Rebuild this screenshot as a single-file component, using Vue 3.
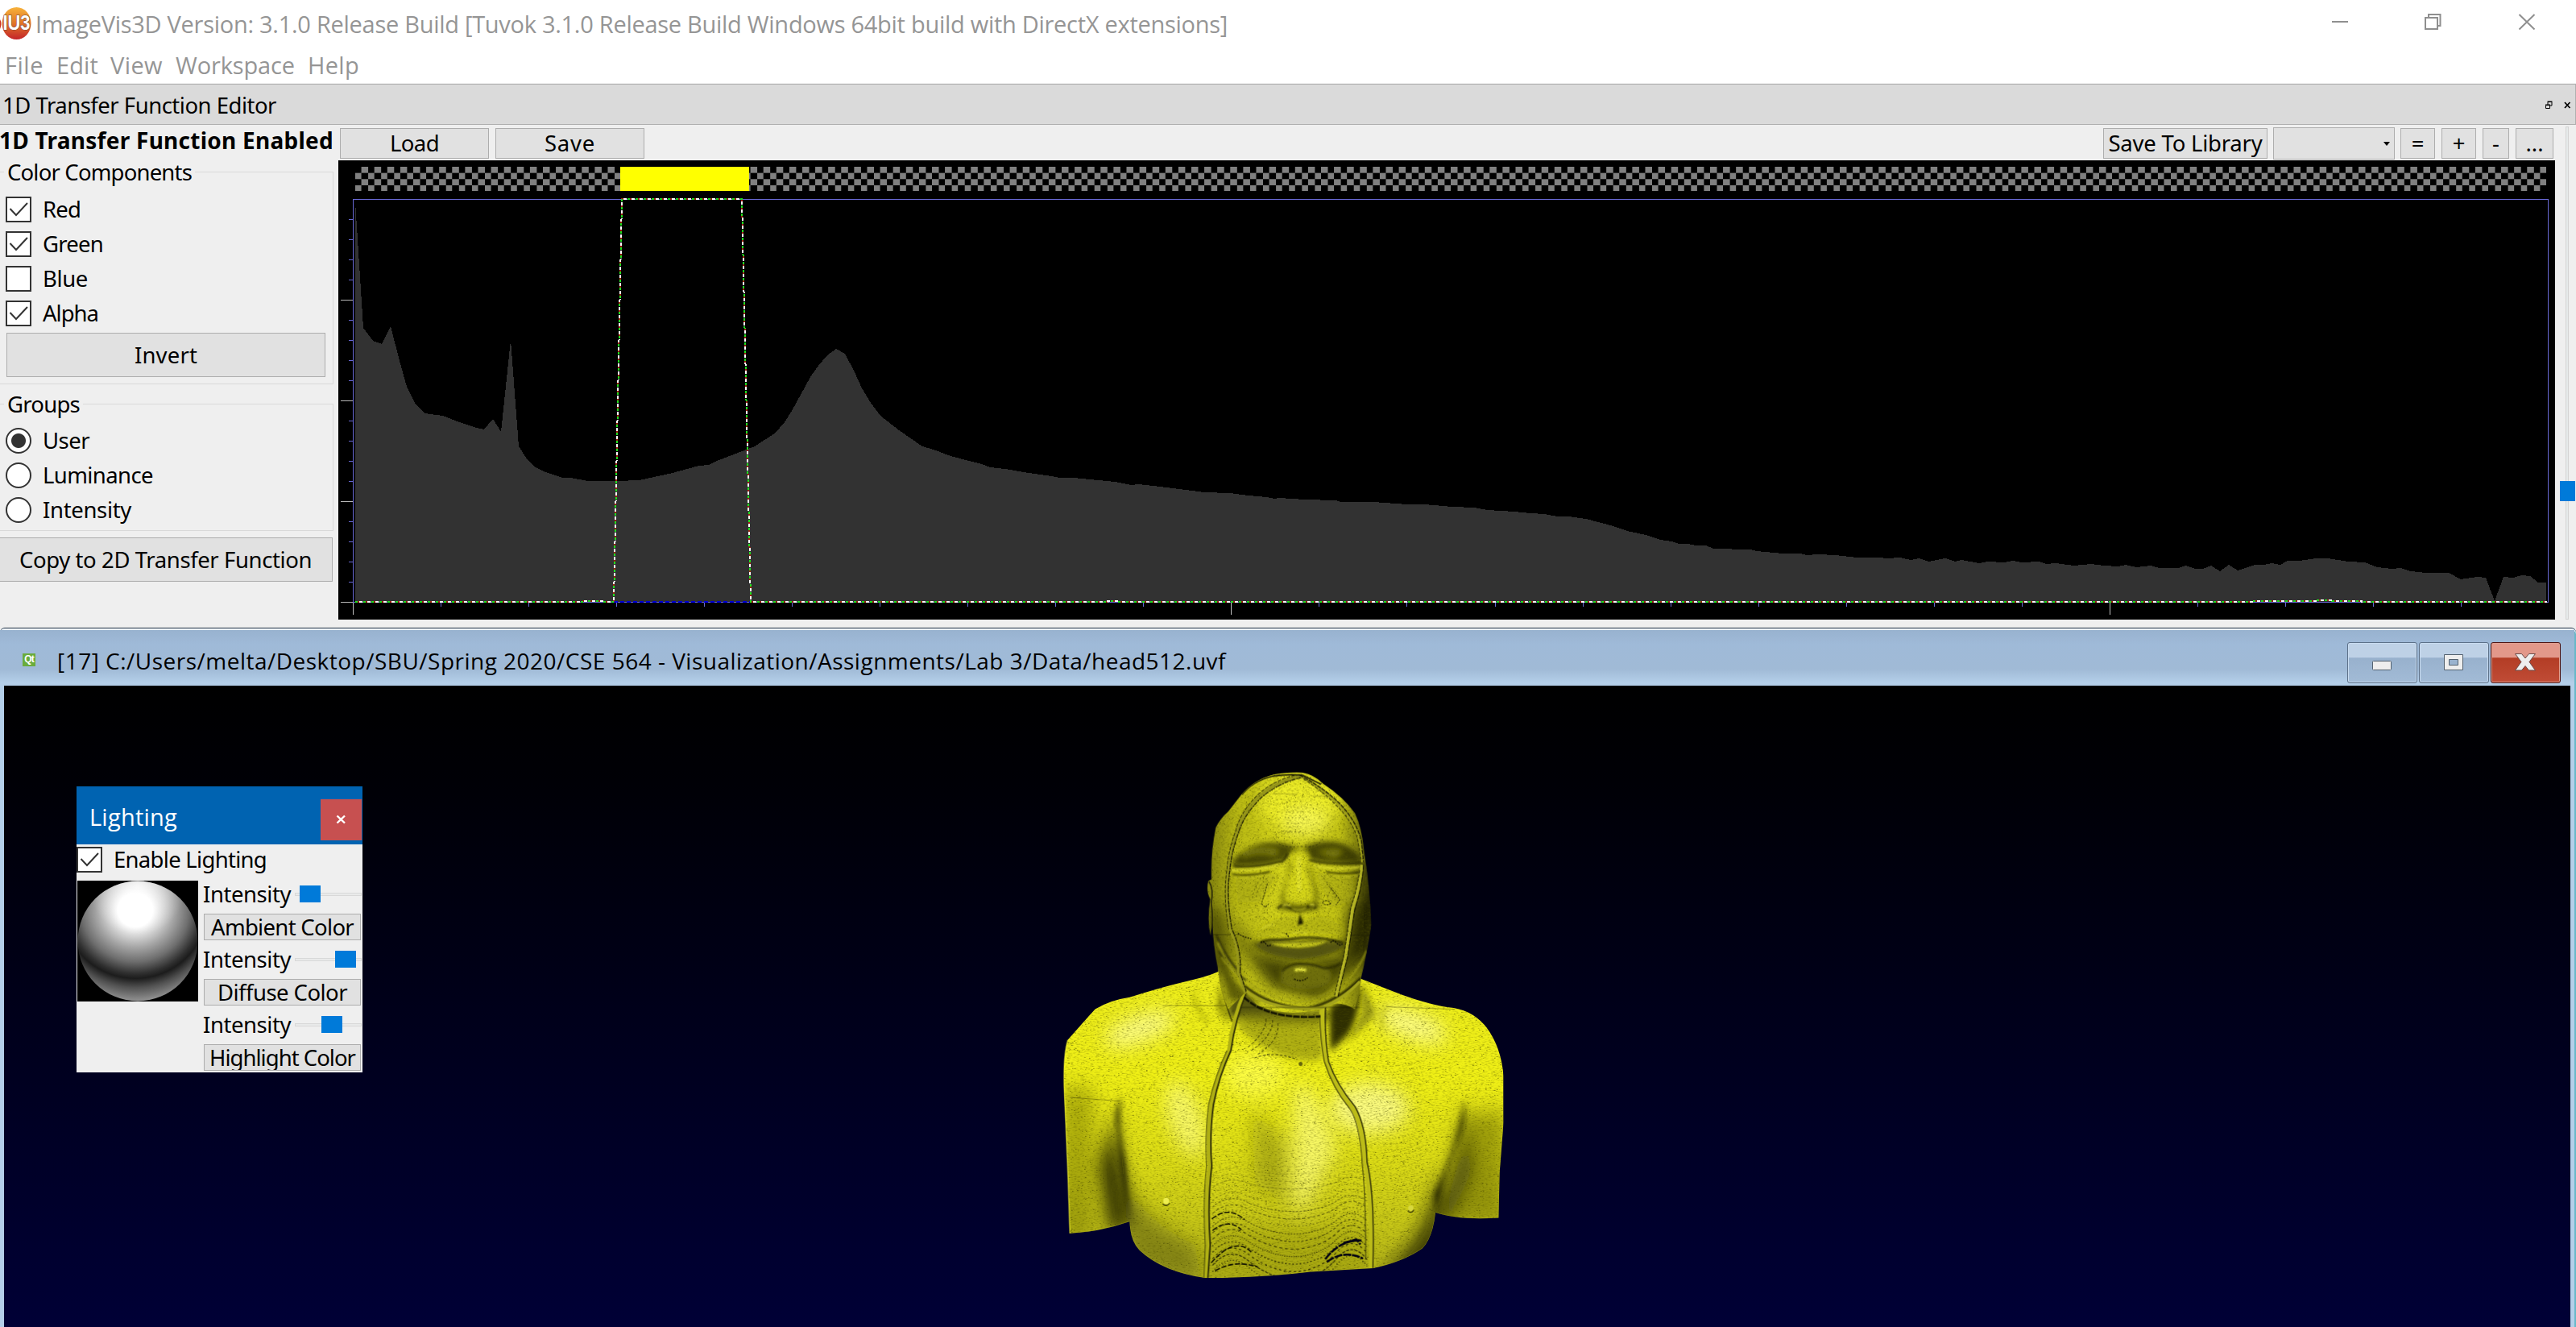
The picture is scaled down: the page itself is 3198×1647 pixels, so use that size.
<script setup>
// Tightens or loosens tracking so a label fills the given advance width.
const vFit = {
  mounted(el, { value }) {
    const n = el.textContent.length
    const w = el.getBoundingClientRect().width
    el.style.letterSpacing = `${(value - w) / n}px`
  },
}

const menus = [
  { label: 'File', w: 48 },
  { label: 'Edit', w: 52 },
  { label: 'View', w: 65 },
  { label: 'Workspace', w: 148 },
  { label: 'Help', w: 64 },
]
const channels = [
  { label: 'Red', w: 47, on: true },
  { label: 'Green', w: 75, on: true },
  { label: 'Blue', w: 56, on: false },
  { label: 'Alpha', w: 69, on: true },
]
const groups = [
  { label: 'User', w: 58, on: true },
  { label: 'Luminance', w: 137, on: false },
  { label: 'Intensity', w: 110, on: false },
]
const lights = [
  { label: 'Ambient Color', w: 177, pos: 5 },
  { label: 'Diffuse Color', w: 161, pos: 49 },
  { label: 'Highlight Color', w: 181, pos: 32 },
]

const histogram = [
  [441, 250], [451, 407], [463, 423], [474, 427], [485, 405], [496, 448], [505, 480], [516, 502], [527, 513], [550, 516],
  [570, 524], [592, 531], [601, 533], [612, 520], [622, 536], [634, 422], [644, 554], [655, 571], [663, 579], [675, 585],
  [698, 593], [708, 593], [730, 597], [765, 597], [794, 596], [835, 587], [868, 578], [880, 577], [890, 572], [924, 559],
  [937, 554], [963, 537], [974, 524], [983, 510], [1006, 468], [1016, 454], [1027, 441], [1038, 433], [1049, 439],
  [1061, 462], [1070, 482], [1081, 500], [1093, 516], [1116, 534], [1145, 554], [1159, 558], [1180, 566], [1203, 572],
  [1219, 576], [1229, 580], [1248, 582], [1271, 586], [1305, 591], [1315, 593], [1333, 593], [1384, 598], [1404, 602],
  [1414, 601], [1440, 604], [1480, 609], [1495, 611], [1527, 612], [1550, 615], [1572, 617], [1582, 619], [1588, 618],
  [1620, 620], [1658, 621], [1665, 623], [1705, 623], [1733, 625], [1747, 626], [1768, 626], [1803, 629], [1830, 630],
  [1847, 633], [1880, 635], [1900, 637], [1917, 638], [1934, 641], [1947, 641], [1969, 644], [2003, 653], [2020, 659],
  [2043, 664], [2062, 670], [2075, 672], [2084, 675], [2095, 675], [2105, 677], [2118, 677], [2127, 681], [2173, 682],
  [2181, 684], [2213, 687], [2235, 687], [2243, 689], [2256, 688], [2279, 689], [2305, 692], [2333, 692], [2342, 693],
  [2359, 692], [2372, 695], [2382, 693], [2395, 697], [2404, 695], [2415, 693], [2427, 697], [2435, 695], [2457, 699],
  [2468, 697], [2488, 698], [2499, 696], [2510, 698], [2531, 697], [2540, 700], [2552, 699], [2575, 702], [2596, 700],
  [2612, 702], [2629, 703], [2639, 701], [2652, 704], [2670, 702], [2681, 705], [2704, 705], [2713, 702], [2725, 706],
  [2735, 706], [2745, 702], [2756, 709], [2767, 701], [2778, 708], [2790, 704], [2800, 701], [2811, 701], [2820, 699],
  [2831, 701], [2840, 696], [2855, 696], [2875, 693], [2890, 693], [2915, 697], [2936, 698], [2951, 704], [2970, 706],
  [2980, 705], [2993, 709], [3011, 711], [3040, 711], [3055, 719], [3075, 716], [3086, 717], [3097, 746], [3108, 716],
  [3120, 717], [3131, 714], [3141, 715], [3151, 723], [3161, 723],
]
const histPath = 'M441,747 L' + histogram.map((p) => p.join(',')).join(' ') + ' L3161,747 Z'
const curve =
  'M441,747 H724 V746 H750 V747 H762 L772,247 H921 L932,747 H1375 V746 H1387 V747 H2796 V746 H2875 V745 H2895 V746 H2932 V747 H3162'

const yTicks = Array.from({ length: 20 }, (_, i) => ({ y: 272.5 + i * 25, major: (i + 1) % 5 === 0 }))
const xTicks = Array.from({ length: 25 }, (_, i) => ({ x: 438.5 + i * 109.04, major: i % 10 === 0 }))

const ripples = Array.from({ length: 17 }, (_, i) => {
  const y = 1165 + i * 18
  const d = 14 + i * 2.4
  return {
    d: `M552,${y + 22} Q605,${y - d * 0.7} 665,${y + 12} Q740,${y + d * 1.3} 815,${y + d * 1.2} Q885,${y + d} 925,${y + 8} Q975,${y - d} 1022,${y + 6}`,
    o: 0.15 + i * 0.04,
    dash: `${3 + (i % 4) * 2} ${4 + (i % 3) * 2}`,
  }
})
const chestLines = Array.from({ length: 22 }, (_, i) => ({
  d: `M${1020 + i * 4},${900 + i * 17} q60,${14 - i} ${170 - i * 4},${-12 - i}`,
  o: 0.3,
}))
const leftLines = Array.from({ length: 14 }, (_, i) => ({
  d: `M${400 + i * 3},${930 + i * 22} q60,8 ${125 - i * 3},${42}`,
  o: 0.22,
}))
</script>

<template>
  <div class="app">
    <header class="titlebar">
      <svg class="logo" width="40" height="44" viewBox="0 0 40 44">
        <defs>
          <linearGradient id="lg" x1="0" y1="0" x2="0" y2="1">
            <stop offset="0" stop-color="#f7b23a" /><stop offset=".5" stop-color="#e07428" /><stop offset="1" stop-color="#c4242a" />
          </linearGradient>
        </defs>
        <ellipse cx="20.500" cy="22" rx="18" ry="20" fill="url(#lg)" />
        <path d="M0,17 q3,5 0,12z" fill="#cc3322" />
        <text x="20.500" y="30" text-anchor="middle" textLength="34" lengthAdjust="spacingAndGlyphs" class="logo-text">IU3</text>
      </svg>
      <span v-fit="1480" class="app-title">ImageVis3D Version: 3.1.0 Release Build [Tuvok 3.1.0 Release Build Windows 64bit build with DirectX extensions]</span>
      <svg class="winctl" width="260" height="30" viewBox="2890 12 260 30" fill="none" stroke="#8f8f8f" stroke-width="2">
        <path d="M2895,27 H2915" />
        <path d="M3011,22 h15 v14 h-15z M3015,22 v-4 h14.500 v14 h-3.500" />
        <path d="M3127.500,18 L3146.500,36.500 M3146.500,18 L3127.500,36.500" />
      </svg>
    </header>
    <nav class="menubar">
      <span v-for="m in menus" :key="m.label" v-fit="m.w">{{ m.label }}</span>
    </nav>

    <div class="dock-title">
      <span v-fit="340">1D Transfer Function Editor</span>
      <svg width="34" height="12" viewBox="3158 124 34 12" fill="none" stroke="#000">
        <path d="M3159.500,129.500 h5 v4 h-5z M3159,129 h6" /><path d="M3162,129 v-3.500 h5 v4.500 h-2.500 M3161.500,125 h6" />
        <path d="M3183,126 l6.500,7 M3189.500,126 l-6.500,7" stroke-width="1.800" />
      </svg>
    </div>

    <main class="editor">
      <aside class="side">
        <div class="enabled"><b v-fit="415">1D Transfer Function Enabled</b></div>
        <div class="legend"><span v-fit="229">Color Components</span></div>
        <div class="box colors">
          <label v-for="c in channels" :key="c.label" class="row">
            <span class="check"><svg v-if="c.on" viewBox="0 0 32 32"><path d="M5.500,15 L13,23 L27,8" /></svg></span>
            <span v-fit="c.w">{{ c.label }}</span>
          </label>
          <button class="btn invert"><span v-fit="78">Invert</span></button>
        </div>
        <div class="legend second"><span v-fit="90">Groups</span></div>
        <div class="box radios">
          <label v-for="g in groups" :key="g.label" class="row">
            <span class="radio" :class="{ on: g.on }"></span>
            <span v-fit="g.w">{{ g.label }}</span>
          </label>
        </div>
        <button class="btn copy"><span v-fit="363">Copy to 2D Transfer Function</span></button>
      </aside>

      <section class="work">
        <div class="toolbar">
          <button class="btn wide"><span v-fit="61">Load</span></button>
          <button class="btn wide"><span v-fit="63">Save</span></button>
          <div class="spacer"></div>
          <button class="btn lib"><span v-fit="191">Save To Library</span></button>
          <div class="combo"><i></i></div>
          <button class="btn eq">=</button>
          <button class="btn plus">+</button>
          <button class="btn minus">-</button>
          <button class="btn dots">...</button>
        </div>
        <svg class="chart" width="2752" height="570" viewBox="420 199 2752 570" shape-rendering="crispEdges">
          <defs>
            <pattern id="chk" x="441" y="207" width="16.100" height="15.300" patternUnits="userSpaceOnUse">
              <rect x="8" width="8" height="7.700" fill="#808080" /><rect y="7.700" width="8" height="7.600" fill="#808080" />
            </pattern>
          </defs>
          <rect x="420" y="199" width="2752" height="570" fill="#000" />
          <rect x="441" y="207" width="2720" height="30" fill="url(#chk)" />
          <rect x="770" y="207" width="160" height="30" fill="#ff0" />
          <path :d="histPath" fill="#323232" />
          <path d="M438.500,763 V247.500 H3163.500 V747.500 H438.500" fill="none" stroke="#6868d4" />
          <path d="M438.500,748 V763" stroke="#aaa" />
          <path v-for="t in yTicks" :key="t.y" :d="`M${t.major ? 423 : 433},${t.y} H438`" :stroke="t.major ? '#b8b8b8' : '#6868d4'" />
          <path v-for="t in xTicks" :key="t.x" :d="`M${t.x},748 V${t.major ? 763 : 753}`" :stroke="t.major ? '#c0c0c0' : '#6868d4'" />
          <path d="M762,747 H932" stroke="#0000d8" stroke-width="2" stroke-dasharray="5 3" />
          <g fill="none" stroke-width="2">
            <path :d="curve" stroke="#a02010" stroke-dasharray="2 8" stroke-dashoffset="-3" />
            <path :d="curve" stroke="#20e020" stroke-dasharray="3 7" />
            <path :d="curve" stroke="#fff" stroke-dasharray="4 6" stroke-dashoffset="-5" />
          </g>
        </svg>
      </section>
      <div class="vslider"><span class="vgroove"></span><span class="vhandle"></span></div>
    </main>

    <section class="mdi">
      <div class="mdi-bar">
        <span class="qt">Qt</span>
        <span v-fit="1451" class="mdi-title">[17] C:/Users/melta/Desktop/SBU/Spring 2020/CSE 564 - Visualization/Assignments/Lab 3/Data/head512.uvf</span>
        <div class="mdi-btns">
          <span class="mb"><svg width="87" height="51"><rect x="31.500" y="23.500" width="23" height="11" rx="1" fill="#eee" stroke="#52606e" /></svg></span>
          <span class="mb">
            <svg width="87" height="51"><path d="M31.500,15.500 h23 v19 h-23z M37.500,21.500 v7 h11 v-7z" fill="#eee" fill-rule="evenodd" stroke="#52606e" /></svg>
          </span>
          <span class="mb close">
            <svg width="87" height="51"><path d="M30.500,14.500 h8 l4.500,5.500 4.500,-5.500 h8 l-7.500,10 7.500,10.500 h-8 l-4.500,-5.500 -4.500,5.500 h-8 l7.500,-10.500z" fill="#eee" stroke="#6a4a48" /></svg>
          </span>
        </div>
      </div>
      <div class="view">
        <div class="lighting">
          <div class="lt-bar">
            <span v-fit="109">Lighting</span>
            <span class="lt-close"><svg width="51" height="51"><path d="M20.500,20.500 l9.500,9 M30,20.500 l-9.500,9" stroke="#fff" stroke-width="2.400" /></svg></span>
          </div>
          <label class="lt-check">
            <span class="check"><svg viewBox="0 0 32 32"><path d="M5.500,15 L13,23 L27,8" /></svg></span>
            <span v-fit="190">Enable Lighting</span>
          </label>
          <div class="lt-body">
            <svg class="sphere" width="150" height="150" viewBox="0 0 150 150">
              <defs>
                <radialGradient id="sp" gradientUnits="userSpaceOnUse" cx="72" cy="36" r="128" gradientTransform="translate(0 2) scale(1 .96)">
                  <stop offset="0" stop-color="#fff" /><stop offset=".17" stop-color="#fff" /><stop offset=".24" stop-color="#dedede" />
                  <stop offset=".38" stop-color="#a4a4a4" /><stop offset=".52" stop-color="#6e6e6e" /><stop offset=".64" stop-color="#303030" />
                  <stop offset=".69" stop-color="#1c1c1c" /><stop offset=".78" stop-color="#505050" /><stop offset=".93" stop-color="#989898" />
                </radialGradient>
                <radialGradient id="sp2" cx=".5" cy=".05" r=".4">
                  <stop offset="0" stop-color="#fff" stop-opacity=".8" /><stop offset="1" stop-color="#fff" stop-opacity="0" />
                </radialGradient>
              </defs>
              <rect width="150" height="150" /><circle cx="75" cy="75" r="74.500" fill="url(#sp)" /><circle cx="75" cy="75" r="74.500" fill="url(#sp2)" />
            </svg>
            <div class="lt-ctl">
              <template v-for="l in lights" :key="l.label">
                <div class="lt-row">
                  <span v-fit="109">Intensity</span>
                  <span class="hs"><i :style="{ left: l.pos + 'px' }"></i></span>
                </div>
                <button class="btn lt-btn"><span v-fit="l.w">{{ l.label }}</span></button>
              </template>
            </div>
          </div>
        </div>

        <svg class="bust" width="640" height="700" viewBox="0 0 1568 1568" preserveAspectRatio="none">
          <defs>
            <filter id="b8" x="-50%" y="-50%" width="200%" height="200%"><feGaussianBlur stdDeviation="9" /></filter>
            <filter id="b3" x="-50%" y="-50%" width="200%" height="200%"><feGaussianBlur stdDeviation="3" /></filter>
            <filter id="b25" x="-60%" y="-60%" width="220%" height="220%"><feGaussianBlur stdDeviation="26" /></filter>
            <filter id="dots" x="0" y="0" width="100%" height="100%">
              <feTurbulence type="fractalNoise" baseFrequency=".5" numOctaves="2" seed="4" />
              <feColorMatrix values="0 0 0 0 .05  0 0 0 0 .05  0 0 0 0 0  0 14 0 0 -9.900" />
            </filter>
            <filter id="grain" x="0" y="0" width="100%" height="100%">
              <feTurbulence type="fractalNoise" baseFrequency=".1 .4" numOctaves="3" seed="9" />
              <feColorMatrix values="0 0 0 0 .1  0 0 0 0 .1  0 0 0 0 0  2.200 0 0 0 -1.060" />
            </filter>
            <linearGradient id="skin" x1="0" y1="640" x2="0" y2="1490" gradientUnits="userSpaceOnUse">
              <stop offset="0" stop-color="#eeee1c" /><stop offset=".35" stop-color="#f0f016" /><stop offset=".6" stop-color="#dede16" /><stop offset="1" stop-color="#b6b61a" />
            </linearGradient>
            <linearGradient id="headg" x1="548" y1="0" x2="1035" y2="0" gradientUnits="userSpaceOnUse">
              <stop offset="0" stop-color="#8a8a10" /><stop offset=".15" stop-color="#b8b814" /><stop offset=".45" stop-color="#d8d81c" />
              <stop offset=".8" stop-color="#c4c416" /><stop offset="1" stop-color="#54540a" />
            </linearGradient>
            <clipPath id="bodyc">
              <path d="M570,640 Q545,652 470,668 T300,712 Q240,720 195,745 Q160,780 112,830 Q98,870 100,960 L104,1040 L112,1200 L118,1368 Q210,1364 300,1335 Q302,1390 330,1415 Q400,1475 530,1492 Q700,1492 850,1475 L1040,1465 Q1130,1448 1190,1410 Q1222,1380 1230,1310 Q1300,1332 1422,1325 L1425,1200 L1437,1060 V930 Q1430,850 1385,795 Q1340,745 1270,740 Q1190,728 1100,695 L1003,660 V600 H570 Z" />
            </clipPath>
            <clipPath id="headc">
              <path d="M640,148 Q680,105 740,92 Q800,84 825,87 Q860,92 888,118 Q950,155 985,200 Q1006,240 1012,300 Q1030,400 1035,510 Q1022,590 1003,660 Q1000,700 985,745 Q940,720 900,735 Q800,775 690,735 L650,700 L600,745 Q575,700 570,640 Q552,560 552,500 L546,540 Q535,500 545,440 Q530,410 540,388 L549,384 Q546,310 562,240 Q575,215 600,195 Z" />
            </clipPath>
          </defs>

          <g clip-path="url(#bodyc)">
            <rect width="1568" height="1568" fill="url(#skin)" />
            <g filter="url(#b25)">
              <ellipse cx="330" cy="800" rx="110" ry="36" fill="#ffff9a" opacity=".85" transform="rotate(-18 330 800)" />
              <ellipse cx="1160" cy="790" rx="110" ry="38" fill="#ffff9a" opacity=".85" transform="rotate(18 1160 790)" />
              <ellipse cx="470" cy="1050" rx="50" ry="110" fill="#ffff80" opacity=".75" transform="rotate(-20 470 1050)" />
              <ellipse cx="1030" cy="1020" rx="120" ry="70" fill="#ffff99" opacity=".8" />
              <ellipse cx="680" cy="930" rx="90" ry="60" fill="#ffff50" opacity=".8" />
              <path d="M800,960 H850 L930,1130 L835,1300 H800z" fill="#ffff80" opacity=".75" />
              <path d="M670,1020 Q740,1080 780,1120 L770,1280 L680,1230z" fill="#8a8a10" opacity=".55" />
              <path d="M270,985 Q240,1060 280,1200 L305,1350 L240,1370 L205,1180z" fill="#161604" opacity=".9" />
              <path d="M1318,1000 Q1310,1120 1240,1300 L1280,1330 L1345,1190z" fill="#161604" opacity=".8" />
              <path d="M90,960 H190 V1390 H90z" fill="#6b6b0c" opacity=".45" />
              <path d="M1340,1030 H1440 V1340 H1240z" fill="#5c5c0c" opacity=".5" />
              <path d="M1240,1180 Q1210,1400 1050,1480 L1260,1470z" fill="#1a1a04" opacity=".8" />
              <path d="M280,1200 Q330,1330 500,1400 L520,1510 L300,1450z" fill="#606010" opacity=".6" />
              <path d="M545,1350 H1030 V1500 H545z" fill="#808010" opacity=".3" />
            </g>
            <g filter="url(#b8)">
              <path d="M262,1070 Q250,1030 275,985 Q258,1060 285,1170 L300,1340 Q270,1200 262,1070z" fill="#0c0c02" />
              <path d="M1316,1000 Q1330,1060 1290,1130 Q1260,1200 1232,1310 L1225,1260 Q1300,1120 1316,1000z" fill="#161604" opacity=".9" />
              <path d="M908,740 L1003,680 Q1000,770 960,820 L910,862z" fill="#1e1e04" opacity=".92" />
              <path d="M600,640 Q700,770 900,745 V780 Q740,800 600,765z" fill="#3a3a08" opacity=".85" />
              <path d="M625,790 Q740,900 885,885 V760 H640z" fill="#96960f" opacity=".7" />
              <path d="M1010,670 L1050,760 L960,840 L1005,760z" fill="#77770f" opacity=".7" />
              <path d="M575,660 L600,790 L565,740z" fill="#606008" opacity=".7" />
              <path d="M495,700 Q500,750 540,780 M1075,735 Q1060,780 1070,800" fill="none" stroke="#a0a012" stroke-width="12" opacity=".6" />
            </g>
            <rect x="90" y="600" width="1360" height="900" filter="url(#grain)" opacity=".5" />
            <rect x="90" y="600" width="1360" height="900" filter="url(#dots)" opacity=".8" />
            <g fill="none" stroke="#0c0c02">
              <path v-for="(r, i) in ripples" :key="'r' + i" :d="r.d" :opacity="r.o" :stroke-dasharray="r.dash" stroke-width="3" />
              <path v-for="(r, i) in chestLines" :key="'c' + i" :d="r.d" :opacity="r.o" stroke-dasharray="3 7" stroke-width="2.500" />
              <path v-for="(r, i) in leftLines" :key="'l' + i" :d="r.d" :opacity="r.o" stroke-dasharray="2 6" stroke-width="2.500" />
              <path d="M895,1440 Q940,1385 1005,1388 M900,1448 Q950,1412 1010,1438 M950,1395 l40,-10 12,14" stroke-width="6" stroke="#000014" stroke-dasharray="24 3" />
              <path d="M550,1328 Q600,1290 650,1330 M552,1360 Q600,1325 640,1358 M548,1450 Q620,1375 670,1420 M560,1472 Q620,1440 690,1462" stroke-width="3.500" stroke-dasharray="16 5" />
              <path d="M680,880 Q740,860 810,885 M690,870 Q760,830 750,780 M670,860 Q735,820 735,775 M660,850 Q715,810 715,770" stroke-width="2.500" stroke-dasharray="8 5" opacity=".65" />
              <path d="M400,735 H600 M1080,738 L1290,745 M118,990 L270,1000" stroke-width="2" opacity=".4" />
              <path d="M575,650 Q580,700 612,780" stroke-width="4" opacity=".6" />
            </g>
            <g fill="none">
              <path d="M650,700 Q615,770 603,860 Q565,930 548,1010 Q535,1100 545,1180 Q530,1280 540,1400 L530,1492" stroke="#b0b014" stroke-width="14" />
              <path d="M655,700 Q622,770 608,860 Q572,930 555,1010 Q542,1100 550,1180 Q536,1280 545,1400 L538,1492" stroke="#2a2a06" stroke-width="4.500" />
              <path d="M596,860 Q560,930 540,1010 Q528,1100 534,1180 Q522,1280 530,1400 L526,1492" stroke="#4a4a0a" stroke-width="2.500" />
              <path d="M886,735 Q880,800 895,880 Q920,960 975,1015 Q1010,1060 1015,1160 Q1040,1260 1036,1465" stroke="#bcbc18" stroke-width="16" />
              <path d="M878,760 Q880,830 892,890 Q918,965 968,1020 Q1000,1060 1008,1180 Q1018,1260 1018,1440" stroke="#3a3a08" stroke-width="2.500" />
              <path d="M896,735 Q892,820 905,890 Q930,955 985,1015 Q1020,1070 1022,1170 Q1046,1260 1040,1465" stroke="#2a2a06" stroke-width="3.500" />
            </g>
            <circle cx="411" cy="1278" r="9" fill="#eeee50" /><path d="M400,1286 q12,10 22,-2" stroke="#3a3a08" fill="none" stroke-width="3" />
            <circle cx="1155" cy="1298" r="8" fill="#d8d840" /><path d="M1146,1306 q10,8 18,-2" stroke="#3a3a08" fill="none" stroke-width="3" />
            <circle cx="820" cy="897" r="6" fill="#66660c" />
          </g>
          <path d="M118,1368 L112,1200 L101,960 Q98,870 112,830" fill="none" stroke="#f4f430" stroke-width="3" opacity=".7" />

          <g clip-path="url(#headc)">
            <rect x="520" y="70" width="540" height="720" fill="url(#headg)" />
            <!-- Facial detail is laid out in its own, finer coordinate space. -->
            <g transform="matrix(.8167 0 0 .7467 490 44.800)">
              <g filter="url(#b25)">
                <ellipse cx="400" cy="170" rx="150" ry="100" fill="#f2f22c" opacity=".85" />
                <ellipse cx="420" cy="240" rx="80" ry="50" fill="#ffff60" opacity=".8" />
                <path d="M140,600 L180,700 L300,860 L480,900 L640,740 L640,520 L590,560 L560,740 L400,760 L240,730z" fill="#1c1c04" opacity=".8" />
                <path d="M655,300 L700,520 L660,760 L620,740z" fill="#141404" opacity=".8" />
                <path d="M60,560 L110,560 L160,800 L60,800z" fill="#2a2a05" opacity=".6" />
              </g>
              <g filter="url(#b8)">
                <path d="M150,390 Q180,345 250,322 Q330,305 400,340 Q470,305 540,315 Q600,330 630,380 L610,392 Q520,400 440,382 L425,352 H370 L345,382 Q250,412 150,402z" fill="#222204" opacity=".78" />
                <path d="M190,352 Q260,325 320,345 L310,365 Q250,345 190,372z M470,352 Q530,338 560,350 L530,372z" fill="#a8a814" opacity=".55" />
                <path d="M385,345 H420 Q440,440 452,500 Q440,540 400,540 Q355,540 352,510 Q370,430 385,345z" fill="#d8d81c" opacity=".8" />
                <path d="M362,380 Q356,450 325,530 L345,540 Q352,450 375,400z M432,390 Q455,450 475,530 L452,530 Q450,480 430,420z" fill="#4c4c08" opacity=".65" />
                <path d="M345,536 Q400,558 460,534 L478,560 Q400,586 315,560z" fill="#2a2a05" opacity=".75" />
                <path d="M240,650 Q300,590 385,590 L410,610 Q470,575 530,610 Q575,640 565,660 Q400,645 240,672z" fill="#b0b014" opacity=".7" />
                <path d="M220,690 Q260,745 400,755 Q540,745 580,690 Q480,672 400,684 Q320,672 220,690z" fill="#26260a" opacity=".7" />
                <path d="M330,790 Q400,750 500,780 Q540,810 500,850 Q400,880 330,840z" fill="#8a8a10" opacity=".65" />
                <path d="M160,445 Q230,435 320,435 L250,540 L170,540z M460,430 Q560,440 600,440 L600,530 L520,560z" fill="#a8a818" opacity=".55" />
                <path d="M100,740 Q160,860 260,920 L140,900z" fill="#2a2a05" opacity=".6" />
              </g>
              <g filter="url(#b3)" fill="none">
                <path d="M145,420 Q230,425 325,400 M455,405 Q540,420 625,408" stroke="#e4e430" stroke-width="6" />
                <path d="M150,436 Q220,445 290,425 M500,425 Q550,440 620,428" stroke="#222204" stroke-width="5" />
                <path d="M150,446 Q210,455 260,440 M520,438 Q570,448 620,440" stroke="#c8c824" stroke-width="4" />
                <path d="M155,404 Q250,412 335,387 Q350,374 356,356 M435,382 Q520,403 628,392" stroke="#141402" stroke-width="5" />
                <path d="M398,370 Q396,430 400,500" stroke="#f8f840" stroke-width="18" opacity=".5" />
                <path d="M318,562 Q345,540 365,560 Q400,588 430,556 Q450,540 460,562" stroke="#101002" stroke-width="5" />
                <path d="M338,552 Q355,542 366,553 M438,550 q10,-8 16,4" stroke="#d8d830" stroke-width="7" />
                <path d="M372,562 Q400,580 425,560" stroke="#c0c020" stroke-width="4" />
                <path d="M255,690 Q280,676 320,680 Q360,678 400,672 Q470,665 560,690" stroke="#101002" stroke-width="6" />
                <path d="M290,694 Q340,688 400,690 Q460,688 500,684 Q480,704 400,710 Q330,710 290,694z" fill="#c6c61c" stroke="none" />
                <path d="M372,656 Q400,644 430,656 M255,640 Q280,620 310,625" stroke="#d6d628" stroke-width="8" opacity=".75" />
                <path d="M335,795 Q360,770 400,768 Q460,770 490,785 Q530,785 555,765" stroke="#1c1c04" stroke-width="5" />
                <path d="M382,794 Q402,784 424,794" stroke="#eded40" stroke-width="12" />
                <path d="M402,588 L412,618 L395,622z" fill="#121202" stroke="#222203" stroke-width="4" />
                <path d="M165,790 Q240,880 380,915 Q500,900 560,830" stroke="#9c9c18" stroke-width="6" opacity=".7" />
                <path d="M195,850 Q290,930 430,935 Q540,910 630,820" stroke="#141403" stroke-width="8" />
                <path d="M100,720 Q150,800 200,830 M90,660 Q130,760 180,800" stroke="#24240a" stroke-width="7" />
                <path d="M110,745 Q170,830 250,870 M95,690 Q130,770 170,810 M570,840 Q620,790 650,720" stroke="#a8a818" stroke-width="5" />
              </g>
              <rect x="20" y="40" width="700" height="980" filter="url(#grain)" opacity=".6" />
              <g fill="none" stroke="#0a0a01">
                <path d="M225,525 Q230,475 262,445 M238,520 Q244,480 280,450 M300,510 Q310,470 325,440 M480,440 L545,510 M475,420 L570,470 M500,465 L540,530" stroke-width="2" stroke-dasharray="7 8" opacity=".6" />
                <path d="M280,470 L258,545 L272,558 L285,545 M485,540 q20,-15 30,5 q-20,10 -30,-5 M515,485 L550,530 L535,550" stroke-width="3" stroke-dasharray="8 3" opacity=".8" />
                <path d="M300,300 Q320,270 370,275 M305,300 Q330,345 400,330 Q470,345 490,295 M340,285 Q380,270 420,285" stroke-width="2" stroke-dasharray="7 7" opacity=".7" />
                <path d="M350,165 H410 M340,185 H420 M350,205 H415 M345,225 H420 M355,245 H410 M350,258 H415" stroke-width="2" stroke-dasharray="4 9" opacity=".6" />
                <path d="M300,135 L390,137 M450,145 H500" stroke-width="2" opacity=".4" />
                <path d="M255,690 q10,-10 20,5 t20,0 M515,690 q10,-15 22,0 t22,5 M380,825 q25,15 50,-5 M170,655 q20,15 50,20 M350,655 l10,15" stroke-width="4" stroke-dasharray="6 4" />
                <path d="M68,660 H175 M590,662 H665" stroke-width="2" opacity=".5" />
              </g>
              <!-- Straps -->
              <g fill="none">
                <path d="M410,68 Q320,85 250,145 Q185,210 168,275 Q140,350 135,420 Q120,520 142,640 Q180,720 172,800 L200,880" stroke="#96961a" stroke-width="12" />
                <path d="M412,74 Q325,92 257,150 Q193,214 174,276 Q146,352 140,422 Q126,520 148,640 Q186,720 178,800 L204,880" stroke="#1a1a04" stroke-width="4" stroke-dasharray="16 2 7 3" />
                <path d="M400,64 Q312,78 243,140 Q178,206 162,273 Q134,348 129,418 Q114,520 136,640" stroke="#2a2a06" stroke-width="3" stroke-dasharray="14 4" />
                <path d="M405,68 Q490,120 540,170 Q600,230 622,300 L636,390" stroke="#a2a21a" stroke-width="12" />
                <path d="M400,66 Q490,114 544,167 Q608,230 630,310 L638,390" stroke="#1a1a04" stroke-width="4" stroke-dasharray="16 3" />
                <path d="M415,80 Q490,130 535,177 Q595,236 615,300 L629,380" stroke="#303008" stroke-width="3" stroke-dasharray="12 5" />
                <path d="M632,400 Q625,480 598,560 Q580,680 572,740 L535,890" stroke="#b4b424" stroke-width="12" />
                <path d="M638,400 Q634,480 605,570 Q589,680 579,740 L543,890" stroke="#1c1c04" stroke-width="3.500" stroke-dasharray="20 3" />
                <path d="M624,420 Q612,500 590,560 Q574,680 564,740 L529,890" stroke="#222206" stroke-width="3" stroke-dasharray="12 4" />
                <path d="M185,138 Q230,85 300,70 Q350,62 410,66 L480,100" stroke="#1a1a04" stroke-width="5" />
              </g>
            </g>
            <rect x="540" y="80" width="500" height="700" filter="url(#dots)" opacity=".7" />
            <path d="M541,390 Q556,410 548,450 Q556,500 546,545" fill="none" stroke="#26260a" stroke-width="4" />
          </g>
          <path d="M655,695 Q730,750 880,742 Q940,725 1000,668" fill="none" stroke="#a4a41c" stroke-width="8" />
          <path d="M648,712 Q720,775 880,765" fill="none" stroke="#141403" stroke-width="6" stroke-dasharray="20 3" />
          <path d="M640,740 H1000" stroke="#111102" stroke-width="2" opacity=".6" />
        </svg>
      </div>
    </section>
  </div>
</template>

<style>
body { margin: 0; background: #efefef; overflow: hidden; }
</style>

<style scoped>
.app { width: 3198px; height: 1647px; display: flex; flex-direction: column; overflow: hidden; background: #efefef; font: 27.500px/38px "Noto Sans", "DejaVu Sans", sans-serif; color: #000; white-space: nowrap; }
.app * { box-sizing: border-box; }
span, b { display: inline-block; }
svg { display: block; flex: none; }
.titlebar { height: 57px; background: #fff; display: flex; align-items: center; padding-right: 48px; font: 29px/57px "Open Sans", sans-serif; color: #959595; flex: none; }
.logo { margin: 0 4px 0 0; }
.app-title { margin-top: 2px; }
.logo-text { font: bold 25px "Liberation Sans Narrow", "Liberation Sans", sans-serif; fill: #fff; stroke: #6a4030; stroke-width: 1px; paint-order: stroke; }
.winctl { margin-left: auto; margin-bottom: 4px; }
.menubar { height: 47px; background: #fff; display: flex; gap: 16px; padding-left: 6px; font: 29px/47px "Open Sans", sans-serif; color: #959595; flex: none; border-bottom: 1px solid #f0f0f0; }
.menubar span:nth-child(3) { margin-left: -1px; }
.dock-title { height: 51px; flex: none; background: #dadada; border: 1px solid #b0b0b0; border-left: 0; display: flex; align-items: center; justify-content: space-between; padding: 2px 4px 0 3px; }
.editor { height: 614px; display: flex; flex: none; }
.side { width: 420px; height: 614px; padding-right: 6px; flex: none; }
.enabled { height: 40px; line-height: 39px; margin-left: -1px; }
.enabled b { font-size: 28px; }
.legend { height: 38px; line-height: 38px; display: flex; align-items: flex-end; }
.legend::before { content: ""; width: 5px; height: 19px; border-top: 1px solid #d9d9d9; margin-right: 4px; }
.legend::after { content: ""; flex: 1; height: 19px; border: solid #d9d9d9; border-width: 1px 1px 0 0; margin-left: 4px; }
.legend.second { margin-top: 6px; }
.box { border: solid #d9d9d9; border-width: 0 1px 1px 0; }
.colors { height: 244px; padding-top: 5px; }
.radios { height: 138px; padding-top: 4px; }
.row { height: 43px; display: flex; align-items: center; gap: 14px; padding-left: 7px; line-height: 43px; }
.check { width: 32px; height: 32px; border: 2px solid #333; background: #fff; flex: none; }
.check svg { width: 32px; height: 32px; margin: -2px; fill: none; stroke: #333; stroke-width: 2; }
.radio { width: 32px; height: 32px; border: 2px solid #333; border-radius: 50%; background: #fff; flex: none; }
.radio.on { background: radial-gradient(circle, #333 8.500px, #fff 9.500px); }
.btn { font: inherit; color: inherit; background: #e1e1e1; border: 1px solid #adadad; padding: 0; margin: 0; border-radius: 0; display: flex; justify-content: center; align-items: center; flex: none; white-space: nowrap; }
.invert { width: 396px; height: 55px; margin: 3px 0 0 8px; }
.copy { width: 415px; height: 55px; margin: 8px 0 0 -2px; }
.work { width: 2752px; flex: none; }
.toolbar { height: 44px; display: flex; align-items: flex-start; padding: 4px 2px 0; }
.toolbar .btn { height: 38px; line-height: 38px; }
.wide { width: 185px; margin-right: 8px !important; }
.spacer { flex: 1; }
.lib { width: 204px; }
.combo { width: 151px; height: 40px; margin: -1px 7px 0; background: #e1e1e1; border: 1px solid #adadad; display: flex; align-items: center; justify-content: flex-end; padding-right: 5px; }
.combo i { border: 4px solid transparent; border-top: 5px solid #000; border-bottom: 0; }
.eq, .plus { width: 43px; margin-right: 8px !important; }
.minus { width: 33px; margin-right: 8px !important; }
.dots { width: 47px; }
.vslider { width: 26px; position: relative; }
.vgroove { position: absolute; left: 13px; top: 2px; width: 4px; height: 612px; border: 1px solid #d4d4d4; background: #e7eaea; }
.vhandle { position: absolute; left: 6px; top: 442px; width: 19px; height: 25px; background: #007ad9; }
.mdi { margin-top: 10px; height: 868px; border-top: 1px solid #203040; background: #b4cfe9; border-radius: 6px 6px 0 0; padding: 0 7px 0 5px; flex: none; box-shadow: inset 0 2px #f0f6fc, inset -2px 0 #68b8c8; }
.mdi-bar { height: 69px; margin: 2px -5px 0 -5px; padding: 0 17px 0 28px; display: flex; align-items: center; background: linear-gradient(#98b2cf, #9fbad8 25%, #a0bad6 70%, #b4cfe9 95%); font: 28px/69px "Open Sans", sans-serif; }
.qt { width: 16px; height: 16px; background: #6aac3c; color: #fff; font: bold 12px/15px "Liberation Sans", sans-serif; text-align: center; margin: 5px 27px 0 0; letter-spacing: -1px; }
.mdi-title { margin-top: 8px; }
.mdi-btns { margin-left: auto; display: flex; gap: 2px; margin-top: 15px; align-self: flex-start; }
.mb { width: 87px; height: 51px; border: 1px solid #5c7088; border-radius: 3px; line-height: 0; background: linear-gradient(#bed1e6 0 37%, #98b1cd 38%, #a2bbd6); box-shadow: inset 0 0 0 1px #c9dcf0; }
.mb svg { margin: -1px; }
.mb.close { border-color: #4e1412; background: linear-gradient(#e2988a 0 37%, #b33d25 38%, #c04c36); box-shadow: inset 0 0 0 1px #e0a090; }
.view { height: 796px; background: linear-gradient(#000 0%, #000006 15%, #000036 100%); position: relative; }
.lighting { position: absolute; left: 90px; top: 125px; width: 355px; height: 355px; background: #efefef; overflow: hidden; }
.lt-bar { height: 72px; background: #0063b1; color: #fff; display: flex; justify-content: space-between; padding: 0 1px 0 16px; font: 29px/75px "Open Sans", sans-serif; }
.lt-close { width: 51px; height: 51px; margin-top: 16px; background: #c75050; line-height: 0; }
.lt-check { display: flex; align-items: center; height: 38px; gap: 14px; }
.lt-body { display: flex; margin-top: 7px; padding-left: 1px; }
.lt-ctl { width: 199px; margin-left: 6px; margin-top: -2px; }
.lt-row { height: 43px; display: flex; line-height: 38px; gap: 5px; }
.hs { width: 83px; height: 4px; margin-top: 17px; border: 1px solid #d8d8d8; background: #e9eaea; position: relative; }
.hs i { position: absolute; top: -10px; width: 26px; height: 21px; background: #007ad9; }
.lt-btn { width: 195px; height: 33px; line-height: 30px; margin: 0 0 5px 1px; overflow: hidden; }
.bust { position: absolute; left: 1275px; top: 69px; }
</style>
